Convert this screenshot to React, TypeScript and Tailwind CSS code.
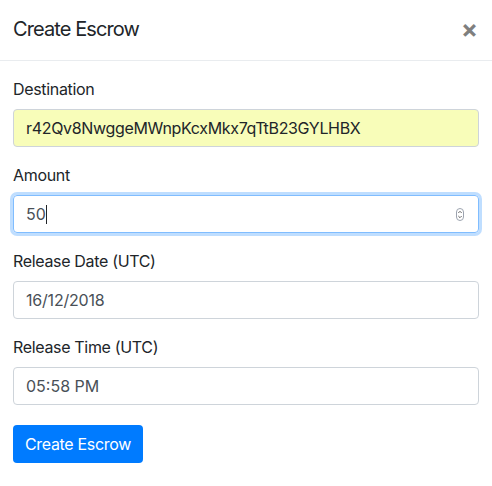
const font = { fontFamily: "Inter, 'Liberation Sans', sans-serif" };

function Field({ label, children }: { label: string; children: React.ReactNode }) {
  return (
    <div className="mb-4">
      <div className="mb-2 text-[16px] leading-6 tracking-[-0.33px] text-[#212529]">{label}</div>
      {children}
    </div>
  );
}

export default function App() {
  return (
    <div className="w-[492px] h-[486px] bg-white" style={font}>
      {/* header */}
      <div className="flex items-start justify-between pl-[13px] pr-[14px] pt-[14px] pb-4 border-b border-[#e9ecef]">
        <h5 className="text-[20px] leading-[30px] tracking-[-0.9px] text-[#212529]">Create Escrow</h5>
        <span className="text-[25px] leading-[30px] font-bold text-[#7f7f7f]">×</span>
      </div>

      {/* body */}
      <div className="px-[13px] pt-4">
        <Field label="Destination">
          <div className="h-[38px] flex items-center px-3 rounded border border-[#ced4da] bg-[#f8fdb9] text-[16px] tracking-[-0.33px] text-[#212529]">
            r42Qv8NwggeMWnpKcxMkx7qTtB23GYLHBX
          </div>
        </Field>

        <Field label="Amount">
          <div className="h-[38px] flex items-center px-3 rounded border border-[#80bdff] shadow-[0_0_0_3px_rgba(0,123,255,0.25)] text-[16px] text-[#495057]">
            <span>50</span>
            <span className="w-px h-[19px] bg-[#212529]" />
            <div className="flex-1" />
            <svg width="8" height="13" viewBox="0 0 8 13" className="mr-[2px]">
              <rect x="0.5" y="0.5" width="7" height="12" rx="3.5" fill="#fff" stroke="#9ca3af" />
              <path d="M2.3 5 L4 3.3 L5.7 5" fill="none" stroke="#555" strokeWidth="0.9" />
              <path d="M2.3 8 L4 9.7 L5.7 8" fill="none" stroke="#555" strokeWidth="0.9" />
            </svg>
          </div>
        </Field>

        <Field label="Release Date (UTC)">
          <div className="h-[38px] flex items-center px-3 rounded border border-[#ced4da] text-[16px] tracking-[-0.2px] text-[#495057]">
            16/12/2018
          </div>
        </Field>

        <Field label="Release Time (UTC)">
          <div className="h-[38px] flex items-center px-3 rounded border border-[#ced4da] text-[16px] text-[#495057]">
            05:58&nbsp;PM
          </div>
        </Field>

        <button className="mt-1 h-[38px] px-3 rounded bg-[#007bff] text-white text-[16px] leading-6 tracking-[-0.33px]">
          Create Escrow
        </button>
      </div>
    </div>
  );
}
